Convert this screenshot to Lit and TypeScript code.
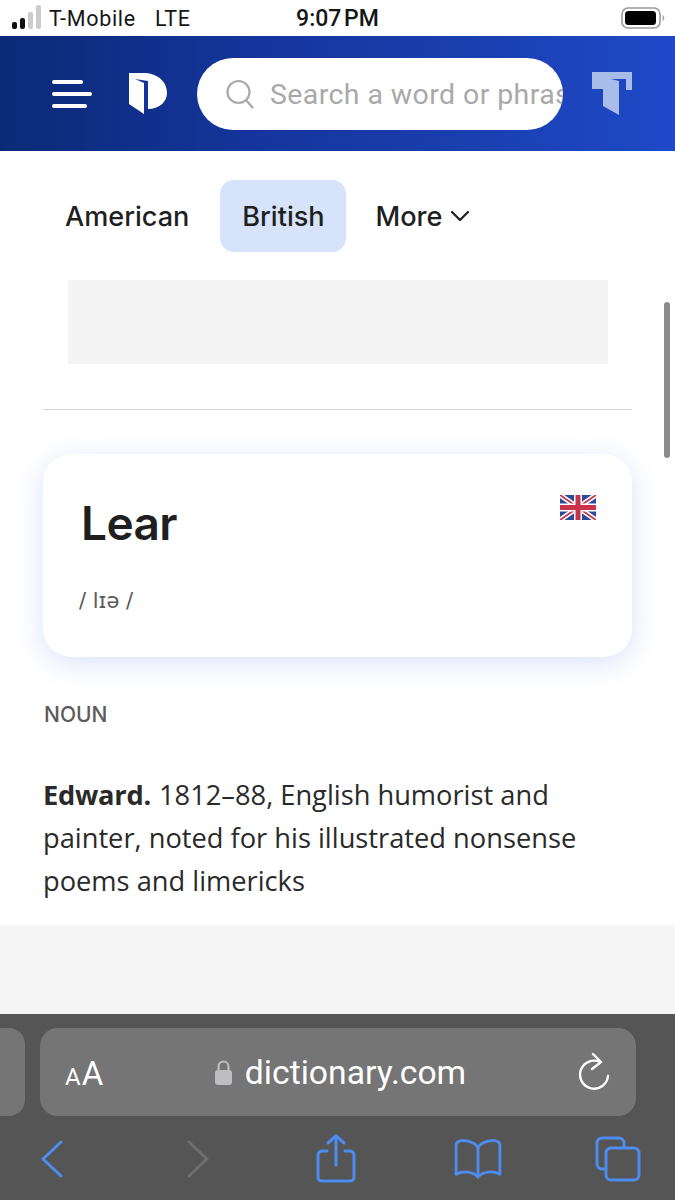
import { LitElement, html, css } from "lit";
import { customElement } from "lit/decorators.js";

@customElement("app-root")
export class AppRoot extends LitElement {
  static styles = css`
    :host { display: block; width: 675px; height: 1200px; position: relative; overflow: hidden; background: #fff; font-family: Inter, "Noto Sans", sans-serif; color: #1f1f1f; }
    .page { display: flex; flex-direction: column; height: 1200px; }
    .status { height: 36px; flex: none; display: grid; grid-template-columns: 1fr auto 1fr; align-items: center; padding: 0 10px 0 12px; font-size: 21.5px; color: #161616; font-family: Roboto, sans-serif; }
    .st-left { display: flex; align-items: center; gap: 7px; }
    .carrier { display: flex; gap: 19px; font-weight: 400; letter-spacing: 0.7px; }
    .time { font-weight: 500; font-size: 23px; word-spacing: -3px; margin-left: -2px; }
    .st-right { display: flex; justify-content: flex-end; }
    .header { height: 115px; flex: none; display: flex; align-items: center; background: linear-gradient(90deg, #0b2a76 0%, #14349a 35%, #1a3fb0 70%, #1f49c9 100%); padding-left: 52px; }
    .burger { flex: none; margin-right: 37px; }
    .logo { flex: none; margin-right: 30px; }
    .search { flex: none; width: 366px; height: 72px; border-radius: 36px; background: #fff; display: flex; align-items: center; padding-left: 28px; box-sizing: border-box; overflow: hidden; gap: 15px; margin-right: 29px; }
    .search span { font-size: 28.5px; color: #a9a9a9; white-space: nowrap; font-family: Roboto, sans-serif; letter-spacing: 0.4px; padding-top: 2px; }
    .search svg { flex: none; }
    .tabs { display: flex; align-items: center; height: 72px; margin: 29px 0 0 0; padding-left: 44px; font-size: 27.1px; font-weight: 500; font-family: Inter, sans-serif; }
    .tab { height: 72px; display: flex; align-items: center; padding: 0 21px; border-radius: 14px; box-sizing: border-box; }
    .tab.on { background: #d6e3fb; margin: 0 9px 0 10px; width: 126px; justify-content: center; padding: 0; }
    .more { gap: 8px; padding-left: 20px; }
    .ad { height: 84px; width: 540px; margin: 28px 0 0 68px; background: #f4f4f4; flex: none; }
    .rule { height: 1px; background: #d5d5d5; margin: 45px 43px 0 43px; flex: none; }
    .card { margin: 44px 43px 0; height: 203px; flex: none; border-radius: 28px; background: #fff; box-shadow: 0 6px 28px rgba(70,110,230,0.2); padding: 39px 36px 0 38px; box-sizing: border-box; display: flex; justify-content: space-between; align-items: flex-start; }
    h1 { margin: 0; font-size: 46px; line-height: 60px; font-weight: 600; color: #1f1f1f; letter-spacing: -0.6px; }
    .ipa { margin: 34px 0 0 -2px; line-height: 28px; color: #5a5a5a; font-family: "DejaVu Sans", sans-serif; font-size: 21px; }
    .flag { margin-top: 2px; }
    .pos { margin: 46px 44px 0; font-size: 21px; line-height: 24px; font-weight: 500; color: #5c5c5c; flex: none; }
    .def { margin: 46px 43px 0; font-size: 27.25px; line-height: 43px; color: #2a2a2a; flex: none; height: 129px; font-family: "Open Sans", sans-serif; }
    .def b { font-weight: 700; letter-spacing: -0.25px; margin-right: 1px; }
    .gap { flex: 1; background: #f5f5f5; margin-top: 23px; }
    .bar { height: 186px; flex: none; background: #555; position: relative; display: flex; flex-direction: column; }
    .urlrow { height: 88px; margin-top: 14px; display: flex; gap: 15px; flex: none; }
    .prevtab { width: 25px; background: #757575; border-radius: 0 16px 16px 0; flex: none; }
    .url { width: 596px; background: #757575; border-radius: 18px; flex: none; display: grid; grid-template-columns: 1fr auto 1fr; align-items: center; padding: 0 25px 0 25px; box-sizing: border-box; color: #fff; }
    .aa { font-family: Roboto, sans-serif; display: flex; align-items: baseline; gap: 1px; font-size: 33px; margin-top: 2px; }
    .aa small { font-size: 24px; }
    .domain { display: flex; align-items: center; gap: 12px; font-size: 33.7px; font-family: Roboto, sans-serif; margin-left: 4px; }
    .reload { justify-self: end; display: flex; }
    .tools { display: flex; align-items: center; padding: 0 0 0 40px; margin-top: 18px; }
    .fwd { margin-left: 123px; }
    .share { margin-left: 107px; }
    .book { margin-left: 97px; }
    .copy { margin-left: 92px; }
    .scroll { position: absolute; left: 664px; top: 302px; width: 6px; height: 156px; border-radius: 3px; background: #8c8c8c; }
  `;

  render() {
    return html`
      <div class="page">
        <div class="status">
          <div class="st-left">
            <svg width="30" height="26" viewBox="0 0 30 26">
              <rect x="0" y="17" width="5" height="7" rx="2" fill="#111"/>
              <rect x="8" y="13" width="5" height="11" rx="2" fill="#111"/>
              <rect x="16" y="7" width="5" height="17" rx="2" fill="#ccc"/>
              <rect x="24" y="0" width="5" height="24" rx="2" fill="#ccc"/>
            </svg>
            <div class="carrier"><span>T-Mobile</span><span>LTE</span></div>
          </div>
          <div class="time">9:07 PM</div>
          <div class="st-right">
            <svg width="44" height="22" viewBox="0 0 44 22">
              <rect x="1" y="1" width="38" height="20" rx="6" fill="none" stroke="#9a9a9a" stroke-width="1.6"/>
              <rect x="4" y="4" width="31" height="14" rx="3.5" fill="#000"/>
              <path d="M41.5 8v6c1.2-.5 1.8-1.6 1.8-3s-.6-2.500-1.800-3z" fill="#aaa"/>
            </svg>
          </div>
        </div>
        <div class="header">
          <svg class="burger" width="40" height="30" viewBox="0 0 40 30">
            <g stroke="#fff" stroke-width="4" stroke-linecap="round">
              <path d="M2 3h27"/><path d="M2 15h36"/><path d="M2 27h31"/>
            </g>
          </svg>
          <svg class="logo" width="38" height="41" viewBox="0 0 38 41">
            <path d="M0 0H14C28 0 38 8 38 20C38 29 30 36 19 36H15V41L0 31Z" fill="#fff"/>
            <path d="M6 6L19 8V36H15V10Z" fill="#13349a"/>
          </svg>
          <div class="search">
            <svg width="30" height="30" viewBox="0 0 30 30" fill="none" stroke="#a9a9a9" stroke-width="2.200">
              <circle cx="13.500" cy="13" r="11"/><path d="M21 21l6.500 7.500" stroke-linecap="round"/>
            </svg>
            <span>Search a word or phrase</span>
          </div>
          <svg width="40" height="43" viewBox="0 0 40 43">
            <path d="M0 0H40V18H34V7H19L27 9V43L11 34V17H0Z" fill="#a9bdea"/>
          </svg>
        </div>
        <div class="tabs">
          <div class="tab">American</div>
          <div class="tab on">British</div>
          <div class="tab more">More
            <svg width="20" height="12" viewBox="0 0 20 12" fill="none" stroke="#1f1f1f" stroke-width="2.200" stroke-linecap="round" stroke-linejoin="round"><path d="M2 2l8 8 8-8"/></svg>
          </div>
        </div>
        <div class="ad"></div>
        <div class="rule"></div>
        <div class="card">
          <div>
            <h1>Lear</h1>
            <div class="ipa">/ lɪə /</div>
          </div>
          <svg class="flag" width="36" height="25" viewBox="0 0 36 25">
            <rect width="36" height="25" fill="#2b4a9b"/>
            <path d="M0 0l36 25M36 0L0 25" stroke="#fff" stroke-width="5"/>
            <path d="M0 0l36 25M36 0L0 25" stroke="#c8324a" stroke-width="1.800"/>
            <path d="M18 0v25M0 12.500h36" stroke="#fff" stroke-width="8"/>
            <path d="M18 0v25M0 12.500h36" stroke="#c8324a" stroke-width="5"/>
          </svg>
        </div>
        <div class="pos">NOUN</div>
        <div class="def"><b>Edward.</b> 1812–88, English humorist and painter, noted for his illustrated nonsense poems and limericks</div>
        <div class="gap"></div>
        <div class="bar">
          <div class="urlrow">
            <div class="prevtab"></div>
            <div class="url">
              <div class="aa"><small>A</small>A</div>
              <div class="domain">
                <svg width="19" height="27" viewBox="0 0 19 27">
                  <path d="M4.500 12V7.500a5 5 0 0 1 10 0V12" fill="none" stroke="#bdbdc2" stroke-width="2.200"/>
                  <rect x="1" y="11" width="17" height="15" rx="3" fill="#bdbdc2"/>
                </svg>
                <span>dictionary.com</span>
              </div>
              <div class="reload">
                <svg width="32" height="38" viewBox="0 0 32 38" fill="none" stroke="#fff" stroke-width="2.400" stroke-linecap="round" stroke-linejoin="round">
                  <path d="M21 9A14 14 0 1 0 29 23"/><path d="M14 1l8 8-9 7"/>
                </svg>
              </div>
            </div>
          </div>
          <div class="tools">
            <svg width="24" height="38" viewBox="0 0 24 38" fill="none" stroke="#4f8cf0" stroke-width="3" stroke-linecap="round" stroke-linejoin="round"><path d="M21 2L3 19l18 17"/></svg>
            <svg class="fwd" width="22" height="38" viewBox="0 0 22 38" fill="none" stroke="#6e6e6e" stroke-width="3" stroke-linecap="round" stroke-linejoin="round"><path d="M2 2l18 17L2 36"/></svg>
            <svg class="share" width="40" height="50" viewBox="0 0 40 50" fill="none" stroke="#4f8cf0" stroke-width="3" stroke-linecap="round" stroke-linejoin="round"><path d="M11 17H6a4 4 0 0 0-4 4v22a4 4 0 0 0 4 4h28a4 4 0 0 0 4-4V21a4 4 0 0 0-4-4h-5"/><path d="M20 31V2"/><path d="M12 9l8-7 8 7"/></svg>
            <svg class="book" width="50" height="40" viewBox="0 0 50 42" fill="none" stroke="#4f8cf0" stroke-width="3" stroke-linecap="round" stroke-linejoin="round"><path d="M25 9C21 2 8 0 4 3c-2 1-2 2-2 4v30c8-4 18-3 23 3 5-6 15-7 23-3V7c0-2 0-3-2-4-4-3-17-1-21 6z"/><path d="M25 9v30"/></svg>
            <svg class="copy" width="46" height="46" viewBox="0 0 46 46" fill="none" stroke="#4f8cf0" stroke-width="3" stroke-linecap="round" stroke-linejoin="round"><path d="M10 33H7a5 5 0 0 1-5-5V7a5 5 0 0 1 5-5h17a5 5 0 0 1 5 5v4"/><rect x="11" y="12" width="33" height="32" rx="5"/></svg>
          </div>
        </div>
      </div>
      <div class="scroll"></div>
    `;
  }
}
